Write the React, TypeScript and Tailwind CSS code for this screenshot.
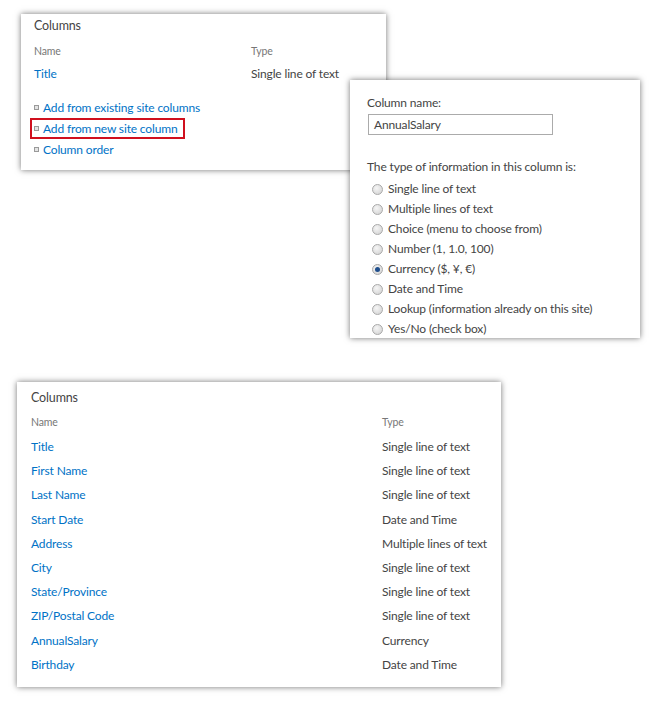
const linkCls = 'text-[#0072c6]';

const topLinks = ['Add from existing site columns', 'Add from new site column', 'Column order'];

const typeOptions = [
  'Single line of text',
  'Multiple lines of text',
  'Choice (menu to choose from)',
  'Number (1, 1.0, 100)',
  'Currency ($, ¥, €)',
  'Date and Time',
  'Lookup (information already on this site)',
  'Yes/No (check box)',
];

const columns: [string, string][] = [
  ['Title', 'Single line of text'],
  ['First Name', 'Single line of text'],
  ['Last Name', 'Single line of text'],
  ['Start Date', 'Date and Time'],
  ['Address', 'Multiple lines of text'],
  ['City', 'Single line of text'],
  ['State/Province', 'Single line of text'],
  ['ZIP/Postal Code', 'Single line of text'],
  ['AnnualSalary', 'Currency'],
  ['Birthday', 'Date and Time'],
];

function Bullet() {
  return <span className="mr-[4px] inline-block h-[5px] w-[5px] shrink-0 border border-[#9a9a9a] bg-[#e4e4e4]" />;
}

function Radio({ checked }: { checked?: boolean }) {
  return (
    <span className="mr-[5px] flex h-[11px] w-[11px] shrink-0 items-center justify-center rounded-full border border-[#a9a9a9] bg-[radial-gradient(circle_at_40%_35%,#f6f6f6,#cfcfcf)]">
      {checked && <span className="h-[5px] w-[5px] rounded-full bg-[#1f4e8c]" />}
    </span>
  );
}

function ColumnsCard() {
  return (
    <div className="ml-[21px] h-[156px] w-[365px] bg-white pl-[13px] pt-[2px] shadow-[0_0_6px_rgba(0,0,0,0.55)]">
      <div className="h-[20px] leading-[20px] text-[12.5px] text-[#444]">Columns</div>
      <div className="mt-[8px] flex h-[16px] items-center text-[10.5px] text-[#777]">
        <span className="w-[217px]">Name</span>
        <span>Type</span>
      </div>
      <div className="mt-[4px] flex h-[20px] items-center">
        <span className={`w-[217px] ${linkCls}`}>Title</span>
        <span className="text-[#444]">Single line of text</span>
      </div>
      <div className="mt-[13px] flex flex-col items-start">
        {topLinks.map((l, i) =>
          i === 1 ? (
            <div
              key={l}
              className="-ml-[4px] flex h-[21px] items-center border-2 border-[#d0101e] pl-[2px] pr-[6px]"
            >
              <Bullet />
              <span className={linkCls}>{l}</span>
            </div>
          ) : (
            <div key={l} className="flex h-[21px] items-center">
              <Bullet />
              <span className={linkCls}>{l}</span>
            </div>
          ),
        )}
      </div>
    </div>
  );
}

function NewColumnCard() {
  return (
    <div className="absolute left-[350px] top-[80px] h-[258px] w-[290px] overflow-hidden bg-white pl-[17px] pt-[13px] text-[#444] shadow-[0_0_6px_rgba(0,0,0,0.55)]">
      <div className="h-[20px] leading-[20px]">Column name:</div>
      <div className="ml-[1px] mt-[1px] flex h-[21px] w-[185px] items-center border border-[#ababab] pl-[5px]">
        AnnualSalary
      </div>
      <div className="mt-[22px] h-[20px] leading-[20px]">The type of information in this column is:</div>
      <div className="mt-[2px]">
        {typeOptions.map((o) => (
          <div key={o} className="flex h-[20px] items-center pl-[5px]">
            <Radio checked={o.startsWith('Currency')} />
            <span>{o}</span>
          </div>
        ))}
      </div>
    </div>
  );
}

function AllColumnsCard() {
  return (
    <div className="ml-[17px] mt-[212px] h-[305px] w-[484px] bg-white pl-[14px] pt-[6px] shadow-[0_0_6px_rgba(0,0,0,0.55)]">
      <div className="h-[20px] leading-[20px] text-[12.5px] text-[#444]">Columns</div>
      <div className="mt-[7px] flex h-[16px] items-center text-[10.5px] text-[#777]">
        <span className="w-[351px]">Name</span>
        <span>Type</span>
      </div>
      <div className="mt-[4px]">
        {columns.map(([name, type]) => (
          <div key={name} className="flex h-[24.2px] items-center">
            <span className={`w-[351px] ${linkCls}`}>{name}</span>
            <span className="text-[#444]">{type}</span>
          </div>
        ))}
      </div>
    </div>
  );
}

export default function App() {
  return (
    <div className="relative h-[709px] w-[661px] bg-white pt-[14px] font-['Lato','Liberation_Sans',sans-serif] text-[12px] tracking-[-0.15px]">
      <ColumnsCard />
      <NewColumnCard />
      <AllColumnsCard />
    </div>
  );
}
